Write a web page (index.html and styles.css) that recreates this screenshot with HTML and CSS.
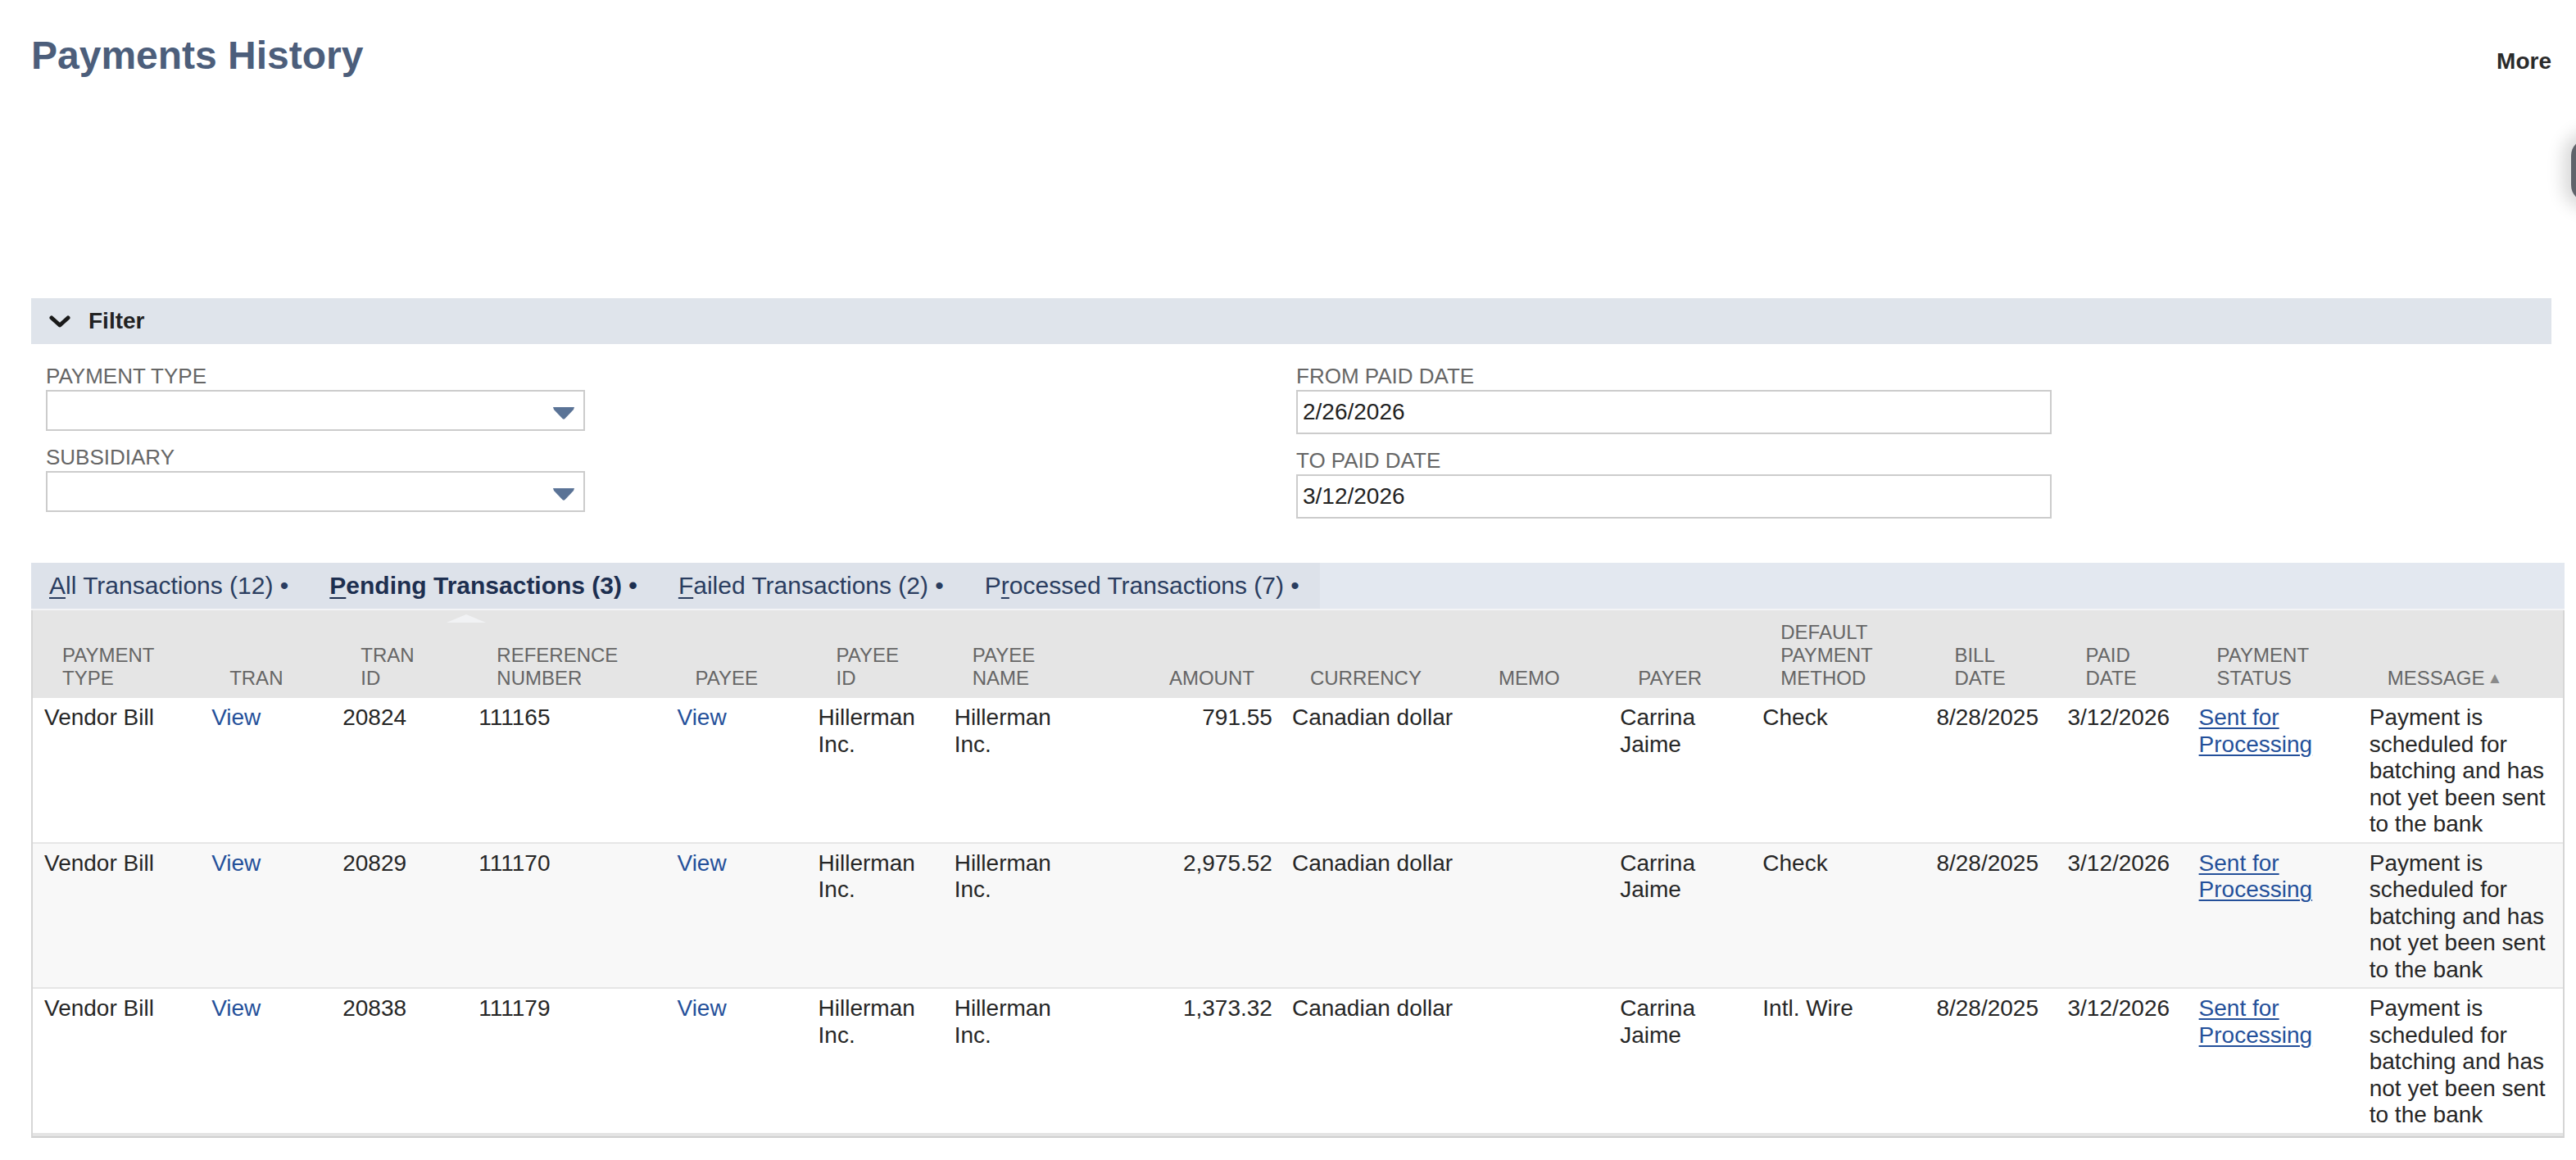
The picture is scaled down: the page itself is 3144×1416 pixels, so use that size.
FILE: index.html
```html
<!DOCTYPE html>
<html lang="en">
<head>
    <meta charset="UTF-8">
    <title>Payments History</title>
    <link rel="stylesheet" href="styles.css">
</head>
<body>
    <div class="page">
        <div class="page-header">
            <h1 class="page-title">Payments History</h1>
            <a class="more-link">More</a>
        </div>
        <div class="side-handle"></div>

        <section class="filter">
            <div class="filter-bar">
                <svg class="filter-chevron" width="26" height="16" viewBox="0 0 26 16">
                    <polyline points="3,3 13,12 23,3" fill="none" stroke="#1a1a1a" stroke-width="5" stroke-linecap="round" stroke-linejoin="round"/>
                </svg>
                <span>Filter</span>
            </div>
            <div class="filter-body">
                <div class="filter-col">
                    <div class="field">
                        <label class="field-label">PAYMENT TYPE</label>
                        <div class="select-box">
                            <svg class="select-arrow" width="28" height="16" viewBox="0 0 28 16">
                                <path d="M1 1 H27 L26 4 L15.5 15 Q14 16.5 12.5 15 L2 4 Z" fill="#5a7396"/>
                            </svg>
                        </div>
                    </div>
                    <div class="field">
                        <label class="field-label">SUBSIDIARY</label>
                        <div class="select-box">
                            <svg class="select-arrow" width="28" height="16" viewBox="0 0 28 16">
                                <path d="M1 1 H27 L26 4 L15.5 15 Q14 16.5 12.5 15 L2 4 Z" fill="#5a7396"/>
                            </svg>
                        </div>
                    </div>
                </div>
                <div class="filter-col">
                    <div class="field">
                        <label class="field-label">FROM PAID DATE</label>
                        <div class="date-box">2/26/2026</div>
                    </div>
                    <div class="field">
                        <label class="field-label">TO PAID DATE</label>
                        <div class="date-box">3/12/2026</div>
                    </div>
                </div>
            </div>
        </section>

        <div class="tabs">
            <div class="tab-strip">
                <span class="tab"><u>A</u>ll Transactions (12) &bull;</span>
                <span class="tab active"><u>P</u>ending Transactions (3) &bull;</span>
                <span class="tab"><u>F</u>ailed Transactions (2) &bull;</span>
                <span class="tab">P<u>r</u>ocessed Transactions (7) &bull;</span>
            </div>
        </div>

        <div class="results-wrap">
            <table class="results">
                <colgroup>
                    <col style="width:204px">
                    <col style="width:160px">
                    <col style="width:166px">
                    <col style="width:242px">
                    <col style="width:172px">
                    <col style="width:166px">
                    <col style="width:180px">
                    <col style="width:232px">
                    <col style="width:230px">
                    <col style="width:170px">
                    <col style="width:174px">
                    <col style="width:212px">
                    <col style="width:160px">
                    <col style="width:160px">
                    <col style="width:208px">
                    <col style="width:250px">
                </colgroup>
                <thead>
                    <tr>
                        <th>PAYMENT TYPE</th>
                        <th>TRAN</th>
                        <th>TRAN ID</th>
                        <th>REFERENCE NUMBER</th>
                        <th>PAYEE</th>
                        <th>PAYEE ID</th>
                        <th>PAYEE NAME</th>
                        <th class="num">AMOUNT</th>
                        <th>CURRENCY</th>
                        <th>MEMO</th>
                        <th>PAYER</th>
                        <th>DEFAULT PAYMENT METHOD</th>
                        <th>BILL DATE</th>
                        <th>PAID DATE</th>
                        <th>PAYMENT STATUS</th>
                        <th>MESSAGE<span class="sort-arrow">&#9650;</span></th>
                    </tr>
                </thead>
                <tbody>
                    <tr>
                        <td>Vendor Bill</td>
                        <td><a class="link">View</a></td>
                        <td>20824</td>
                        <td>111165</td>
                        <td><a class="link">View</a></td>
                        <td>Hillerman Inc.</td>
                        <td>Hillerman Inc.</td>
                        <td class="num">791.55</td>
                        <td>Canadian dollar</td>
                        <td></td>
                        <td>Carrina Jaime</td>
                        <td>Check</td>
                        <td>8/28/2025</td>
                        <td>3/12/2026</td>
                        <td><a class="link status">Sent for Processing</a></td>
                        <td class="message">Payment is scheduled for batching and has not yet been sent to the bank</td>
                    </tr>
                    <tr class="alt">
                        <td>Vendor Bill</td>
                        <td><a class="link">View</a></td>
                        <td>20829</td>
                        <td>111170</td>
                        <td><a class="link">View</a></td>
                        <td>Hillerman Inc.</td>
                        <td>Hillerman Inc.</td>
                        <td class="num">2,975.52</td>
                        <td>Canadian dollar</td>
                        <td></td>
                        <td>Carrina Jaime</td>
                        <td>Check</td>
                        <td>8/28/2025</td>
                        <td>3/12/2026</td>
                        <td><a class="link status">Sent for Processing</a></td>
                        <td class="message">Payment is scheduled for batching and has not yet been sent to the bank</td>
                    </tr>
                    <tr>
                        <td>Vendor Bill</td>
                        <td><a class="link">View</a></td>
                        <td>20838</td>
                        <td>111179</td>
                        <td><a class="link">View</a></td>
                        <td>Hillerman Inc.</td>
                        <td>Hillerman Inc.</td>
                        <td class="num">1,373.32</td>
                        <td>Canadian dollar</td>
                        <td></td>
                        <td>Carrina Jaime</td>
                        <td>Intl. Wire</td>
                        <td>8/28/2025</td>
                        <td>3/12/2026</td>
                        <td><a class="link status">Sent for Processing</a></td>
                        <td class="message">Payment is scheduled for batching and has not yet been sent to the bank</td>
                    </tr>
                </tbody>
            </table>
        </div>
    </div>
</body>
</html>
```

FILE: styles.css
```css
body {
    margin: 0;
    overflow: hidden;
    background: #ffffff;
    font-family: "Liberation Sans", Arial, sans-serif;
    color: #262626;
}
.page {
    position: relative;
    padding: 40px 14px 0 38px;
}
.page-header {
    display: flex;
    justify-content: space-between;
    align-items: baseline;
    margin-right: 16px;
}
.page-title {
    margin: 0;
    font-size: 48px;
    line-height: 56px;
    font-weight: bold;
    color: #4c5e7b;
}
.more-link {
    font-size: 28px;
    font-weight: bold;
    color: #2b2b2b;
}
.side-handle {
    position: absolute;
    top: 170px;
    right: -34px;
    width: 40px;
    height: 76px;
    border-radius: 22px;
    background: #60636a;
    box-shadow: 0 0 20px 10px rgba(0, 0, 0, 0.15);
}

/* filter */
.filter {
    margin-top: 268px;
}
.filter-bar {
    display: flex;
    align-items: center;
    height: 56px;
    margin-right: 16px;
    padding-left: 22px;
    background: #dfe4eb;
    font-size: 28px;
    font-weight: bold;
    color: #222;
}
.filter-chevron {
    margin-right: 22px;
    margin-top: 2px;
}
.filter-body {
    display: grid;
    grid-template-columns: 1526px 1fr;
    padding: 24px 0 54px 18px;
}
.filter-col {
    display: flex;
    flex-direction: column;
    gap: 17px;
}
.field {
    display: flex;
    flex-direction: column;
}
.field-label {
    font-size: 26px;
    line-height: 30px;
    color: #666;
    margin-bottom: 2px;
}
.select-box {
    position: relative;
    box-sizing: border-box;
    width: 658px;
    height: 50px;
    border: 2px solid #cccccc;
    background: #fff;
}
.select-arrow {
    position: absolute;
    right: 10px;
    top: 18px;
}
.date-box {
    box-sizing: border-box;
    width: 922px;
    height: 54px;
    border: 2px solid #cccccc;
    padding: 0 6px;
    font-size: 28px;
    line-height: 50px;
    color: #222;
}

/* tabs */
.tabs {
    display: flex;
    height: 56px;
    background: #e3e8f0;
    border-bottom: 2px solid #f3f4f6;
}
.tab-strip {
    display: flex;
    align-items: center;
    background: #dde2ea;
}
.tab {
    position: relative;
    padding: 0 25px;
    font-size: 30px;
    color: #2a3d60;
    white-space: nowrap;
}
.tab:first-child {
    padding-left: 22px;
}
.tab u {
    text-decoration-thickness: 2px;
    text-underline-offset: 4px;
}
.tab.active {
    font-weight: bold;
    color: #1d2f50;
}
.tab.active::after {
    content: "";
    position: absolute;
    left: 168px;
    bottom: -28px;
    width: 0;
    height: 0;
    border-left: 24px solid transparent;
    border-right: 24px solid transparent;
    border-bottom: 10px solid #f1f2f4;
}

/* results table */
.results-wrap {
    border-left: 2px solid #d6d6d6;
    border-right: 2px solid #d6d6d6;
    border-bottom: 2px solid #cfcfcf;
}
.results {
    width: 100%;
    table-layout: fixed;
    border-collapse: collapse;
}
.results th {
    background: #e5e5e5;
    padding: 13px 40px 10px 36px;
    font-size: 24px;
    line-height: 28px;
    font-weight: normal;
    color: #666;
    text-align: left;
    vertical-align: bottom;
}
.results th.num {
    text-align: right;
    padding-right: 32px;
}
.sort-arrow {
    font-size: 19px;
    color: #8a8a8a;
    margin-left: 3px;
    vertical-align: 2px;
}
.results td {
    padding: 8px 12px 5px 14px;
    font-size: 28px;
    line-height: 32.5px;
    vertical-align: top;
    color: #262626;
    border-top: 2px solid #e6e6e6;
}
.results tbody tr:first-child td {
    border-top: none;
}
.results tbody tr:last-child td {
    border-bottom: 4px solid #e4e4e4;
}
.results td.num {
    text-align: right;
    padding-right: 10px;
}
.results td.message {
    padding-right: 8px;
}
.results tr.alt td {
    background: #f8f8f8;
}
.link {
    color: #24509a;
    cursor: pointer;
}
.link.status {
    text-decoration: underline;
    text-decoration-thickness: 2px;
    text-underline-offset: 3px;
}
```
